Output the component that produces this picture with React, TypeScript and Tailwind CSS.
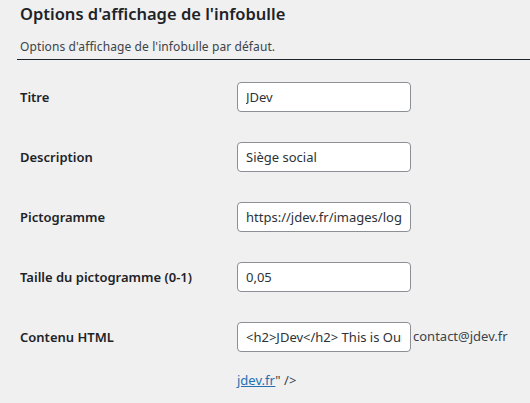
import React from "react";

const fields = [
  { label: "Titre", value: "JDev" },
  { label: "Description", value: "Siège social" },
  { label: "Pictogramme", value: "https://jdev.fr/images/logo.png" },
  { label: "Taille du pictogramme (0-1)", value: "0,05" },
];

function Field({ value }: { value: string }) {
  return (
    <input
      readOnly
      value={value}
      className="w-[174px] h-[30px] rounded-[4px] border border-[#8c8f94] bg-white px-2 text-[13px] text-[#2c3338] outline-none align-middle"
    />
  );
}

export default function App() {
  return (
    <div
      className="min-h-[403px] w-[530px] overflow-hidden bg-[#f0f0f1] text-[12px] text-[#3c434a]"
      style={{ fontFamily: '"Noto Sans", "Open Sans", sans-serif' }}
    >
      <div className="pl-5 pt-[3px]">
        <h2 className="text-[16.5px] font-semibold leading-[22px] text-[#1d2327]">
          Options d'affichage de l'infobulle
        </h2>
      </div>
      <p className="ml-[17px] mt-[13px] border-b border-[#1d2327] pl-[3px] pb-[3px] leading-[18px] tracking-[0.1px]">
        Options d'affichage de l'infobulle par défaut.
      </p>

      <div className="mt-[7px] pl-5">
        {fields.map((f) => (
          <div key={f.label} className="flex h-[60px]">
            <div className="w-[217px] pt-[21px] text-[13px] font-semibold leading-[18px] text-[#1d2327]">
              {f.label}
            </div>
            <div className="pt-[15px]">
              <Field value={f.value} />
            </div>
          </div>
        ))}
        <div className="flex">
          <div className="w-[217px] pt-[21px] text-[13px] font-semibold leading-[18px] text-[#1d2327]">
            Contenu HTML
          </div>
          <div className="pt-[15px] text-[13px]">
            <div className="flex items-center">
              <Field value="<h2>JDev</h2> This is Our Head Office" />
              <span className="ml-[2px]">contact@jdev.fr</span>
            </div>
            <div className="mt-[19px] leading-[18px]">
              <a className="text-[#2271b1] underline">jdev.fr</a>
              <span>" /&gt;</span>
            </div>
          </div>
        </div>
      </div>
    </div>
  );
}
